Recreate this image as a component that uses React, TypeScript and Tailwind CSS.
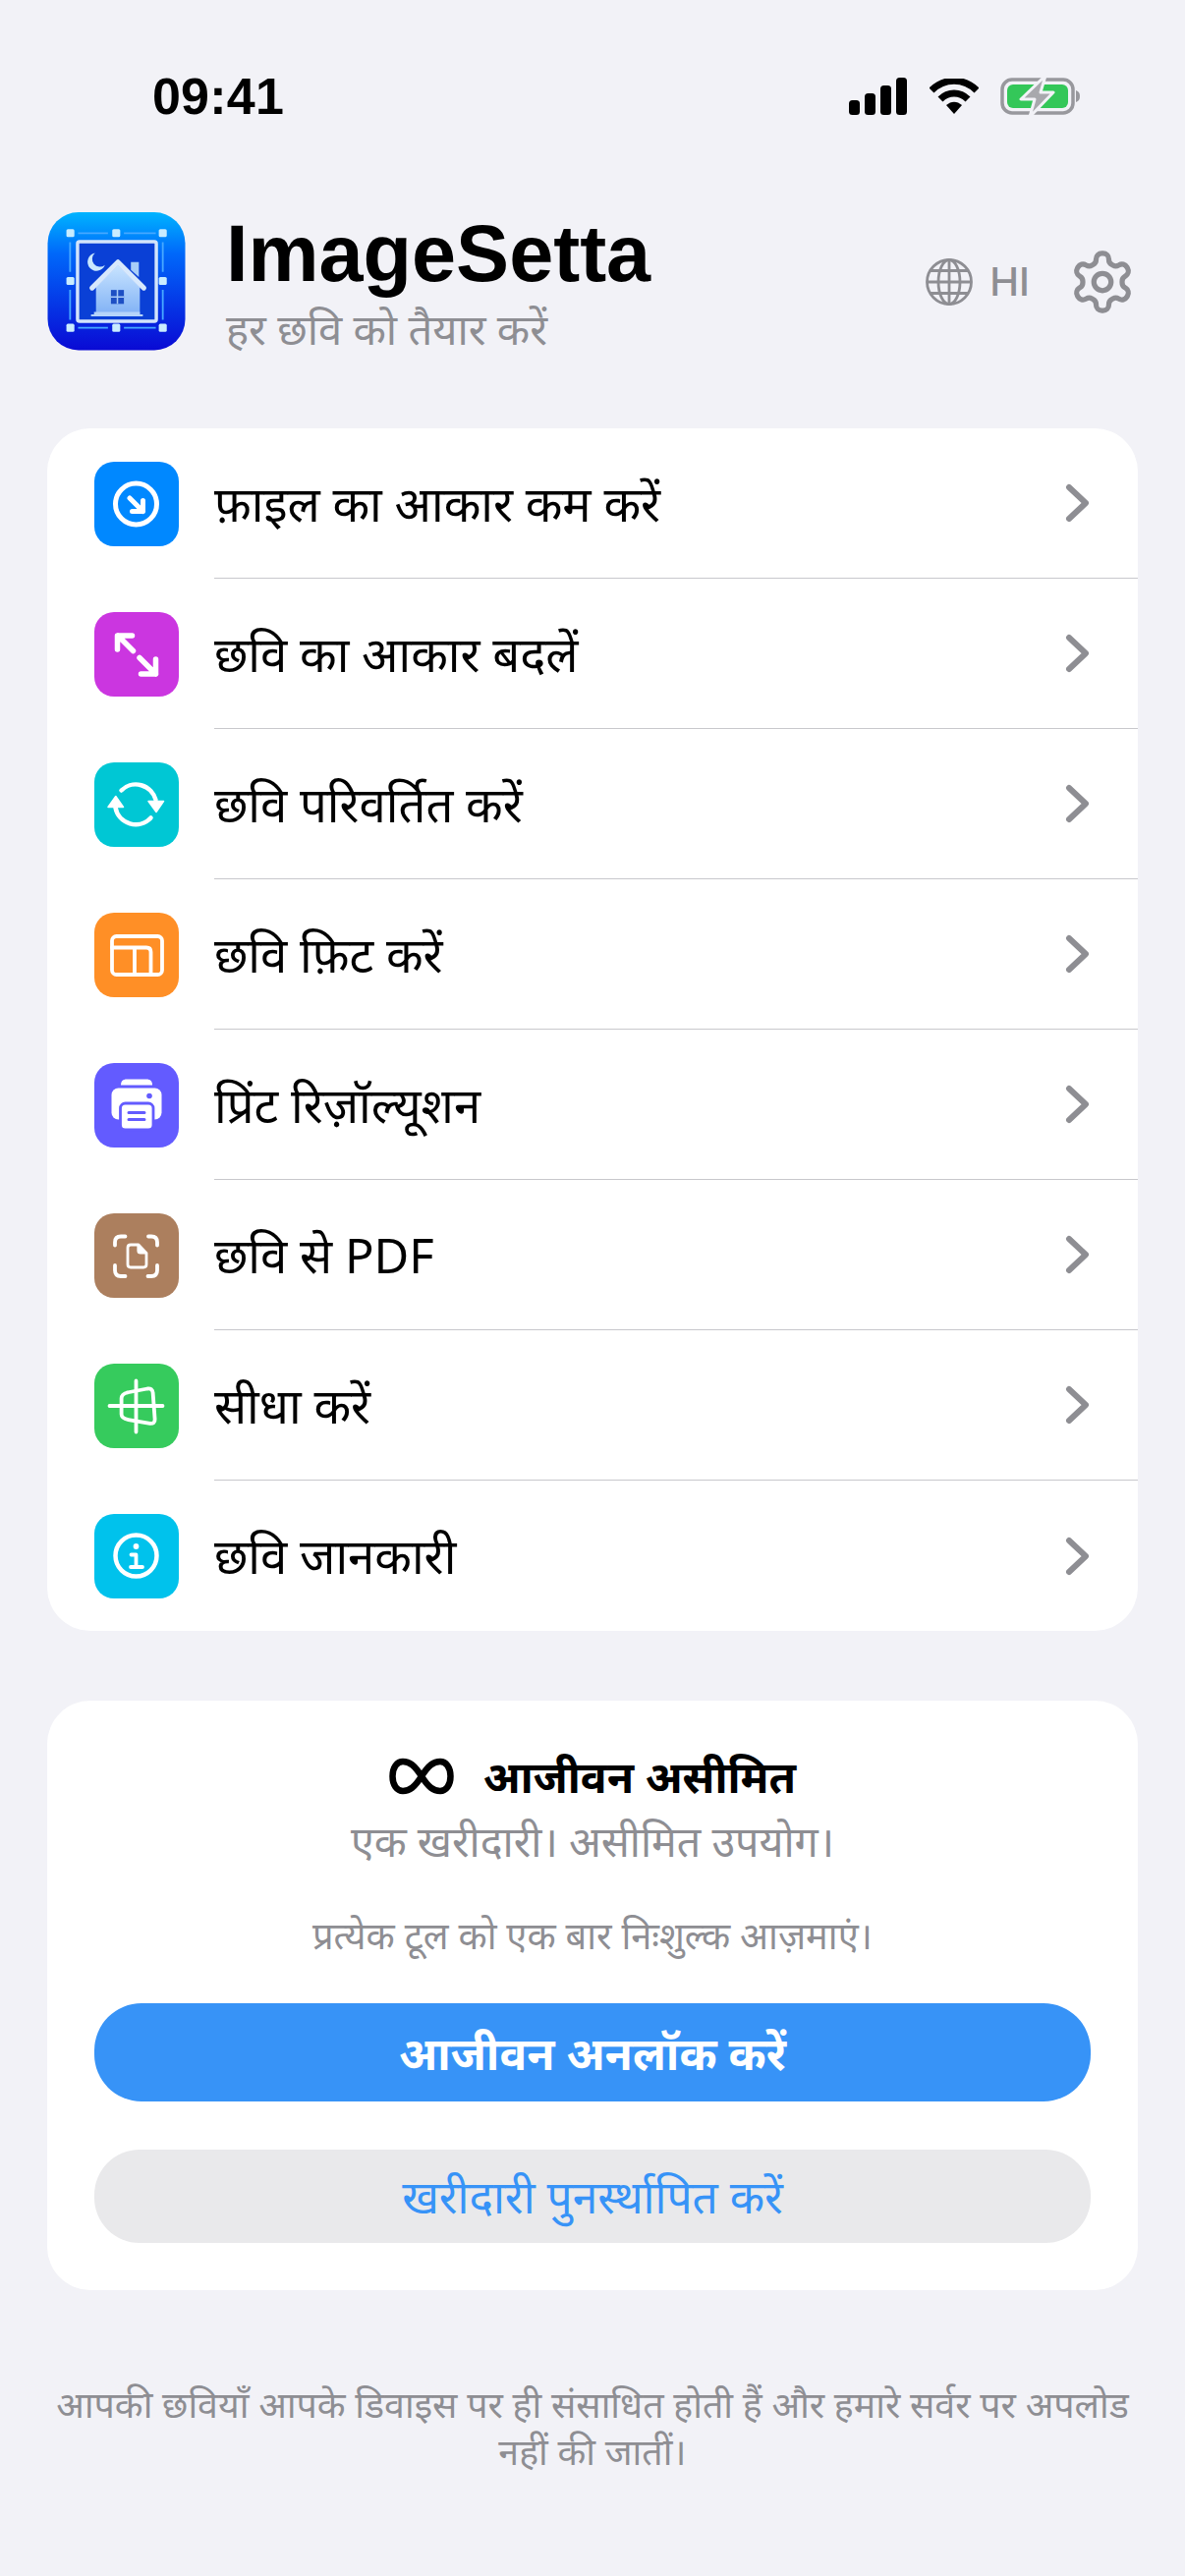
const rows = [
  { label: 'फ़ाइल का आकार कम करें', color: 'bg-[#0088ff]', icon: 'shrink' },
  { label: 'छवि का आकार बदलें', color: 'bg-[#cb36e0]', icon: 'resize' },
  { label: 'छवि परिवर्तित करें', color: 'bg-[#00c7d4]', icon: 'convert' },
  { label: 'छवि फ़िट करें', color: 'bg-[#ff8f26]', icon: 'fit' },
  { label: 'प्रिंट रिज़ॉल्यूशन', color: 'bg-[#635bff]', icon: 'print' },
  { label: 'छवि से PDF', color: 'bg-[#ac7f5e]', icon: 'pdf' },
  { label: 'सीधा करें', color: 'bg-[#36cb5d]', icon: 'straighten' },
  { label: 'छवि जानकारी', color: 'bg-[#00c2ec]', icon: 'info' },
];

function RowIcon({ name }: { name: string }) {
  const line = { fill: 'none', stroke: 'white', strokeLinecap: 'round', strokeLinejoin: 'round' } as const;
  return (
    <svg viewBox="0 0 86 86" className="w-full h-full">
      {name === 'shrink' && (
        <g {...line} strokeWidth={5}>
          <circle cx="42.5" cy="43" r="21" />
          <path d="M36 37l13.5 13.5M49.5 39.5v11H38.5" />
        </g>
      )}
      {name === 'resize' && (
        <g {...line} strokeWidth={5.5}>
          <path d="M23.5 38V24h15M24 24l15.5 15.5M62.5 48v15h-15M62.5 63L46 46.5" />
        </g>
      )}
      {name === 'convert' && (
        <g>
          <g {...line} strokeWidth={4.5}>
            <path d="M27.5 28.5A21 21 0 0 1 62.5 38" />
            <path d="M57.5 56.5A21 21 0 0 1 21.5 46" />
          </g>
          <path d="M55 39.5H70.5L63 50.5zM14 45.5H29.5L21.8 34.5z" fill="white" stroke="white" strokeLinejoin="round" strokeWidth={1.5} />
        </g>
      )}
      {name === 'fit' && (
        <g {...line} strokeWidth={3.8}>
          <rect x="18" y="24" width="51" height="39" rx="4.5" />
          <path d="M18 35.5h35q4.5 0 4.5 4.5v23M41 35.5V63" />
        </g>
      )}
      {name === 'print' && (
        <g>
          <path d="M27 22.5c0-4 2-6 6-6h20c4 0 6 2 6 6z" fill="white" />
          <rect x="17.5" y="25.5" width="51" height="32" rx="7" fill="white" />
          <circle cx="56" cy="33.5" r="2.8" fill="#635bff" />
          <rect x="26.5" y="41" width="33.5" height="27" rx="5" fill="white" stroke="#635bff" strokeWidth={2.8} />
          <path d="M35 50.5h16M35 57.5h16" stroke="#635bff" strokeWidth={3} strokeLinecap="round" />
        </g>
      )}
      {name === 'pdf' && (
        <g {...line} strokeWidth={3.8}>
          <path d="M21 32.5v-3q0-6 6-6h4.5M55 23.5h3q6 0 6 6v3M64 53v5q0 6-6 6h-3.5M31.5 64H27q-6 0-6-6v-5" />
          <path d="M37 32h8l8 8.5V52q0 3-3 3H37q-3 0-3-3V35q0-3 3-3z" strokeWidth={2.8} />
          <path d="M44.5 32v6q0 2.5 2.5 2.5h6" strokeWidth={2.2} fill="white" />
        </g>
      )}
      {name === 'straighten' && (
        <g {...line}>
          <path d="M42.5 17.5v52M15.5 43h54" strokeWidth={3.8} />
          <path d="M33 29.5l21-4q5-.8 5.6 4l2 27q.2 5-5 4.4l-22-3.8q-7-1.3-7-5.5v-16q0-5 6.4-6.1z" strokeWidth={3.8} />
        </g>
      )}
      {name === 'info' && (
        <g>
          <circle cx="42.5" cy="42.5" r="21" {...line} strokeWidth={4.5} />
          <circle cx="42.5" cy="33" r="2.9" fill="white" />
          <path d="M37.5 41.5h5V54M37 54h12" {...line} strokeWidth={3.8} />
        </g>
      )}
    </svg>
  );
}

function AppLogo() {
  const hx = [23.3, 69.3, 116];
  const hy = [21, 69, 116];
  return (
    <svg viewBox="0 0 139 139" className="w-full h-full">
      <defs>
        <linearGradient id="logoBg" x1="0" y1="0" x2="0" y2="1">
          <stop offset="0" stopColor="#00b4ff" />
          <stop offset="0.3" stopColor="#0068fa" />
          <stop offset="1" stopColor="#0a0ad4" />
        </linearGradient>
        <linearGradient id="houseFill" x1="0" y1="0" x2="0" y2="1">
          <stop offset="0" stopColor="#c8e4ff" />
          <stop offset="1" stopColor="#7fb0f5" />
        </linearGradient>
      </defs>
      <rect x="0.5" y="0" width="138" height="138.5" rx="31" fill="url(#logoBg)" />
      <g stroke="#46a8ff" strokeWidth="1.8" fill="none">
        <path d="M31 21h30M77 21h32M31 116h30M77 116h32M23 30v30M116 30v30M23 78v30M116 78v30" />
      </g>
      {hx.map((x) =>
        hy.map((y) =>
          x === hx[1] && y === hy[1] ? null : (
            <rect key={`${x}-${y}`} x={x - 4} y={y - 4} width="8" height="8" rx="1.5" fill="#c9ecff" />
          ),
        ),
      )}
      <rect x="30.5" y="29.5" width="79" height="80" rx="2" fill="#0a40d6" stroke="#d3e4fb" strokeWidth="3.4" />
      <path d="M48 41a9 9 0 1 0 10 12a7.5 7.5 0 0 1-10-12z" fill="#c9e8ff" />
      <path d="M84 50h8v15l-8-7z" fill="#a8cdf8" />
      <path d="M49 75v29h44V75L71 53z" fill="url(#houseFill)" />
      <path d="M45 76L71 50l26 26" fill="none" stroke="#d7e8fc" strokeWidth="5" strokeLinecap="round" strokeLinejoin="round" />
      <path d="M47 100h46v2.5h3v2H44v-2h3z" fill="#b5d4fa" />
      <path d="M64 78h13v14H64z" fill="#1d4fc4" />
      <path d="M70.5 78v14M64 85h13" stroke="#a8caf7" strokeWidth="1.5" />
    </svg>
  );
}

function StatusBar() {
  return (
    <div className="flex items-center justify-between h-[196px] pl-[155px] pr-[106px]">
      <span className="font-['Liberation_Sans'] font-bold text-[52px] text-black tracking-[0.2px] leading-none">09:41</span>
      <div className="flex items-center gap-[22px]">
        <svg viewBox="0 0 60 38" className="w-[60px] h-[38px]" fill="black">
          <rect x="0" y="23" width="11" height="15" rx="3.5" />
          <rect x="16" y="16" width="11" height="22" rx="3.5" />
          <rect x="32" y="8" width="11" height="30" rx="3.5" />
          <rect x="48" y="0" width="11" height="38" rx="3.5" />
        </svg>
        <svg viewBox="0 0 50 36" className="w-[50px] h-[36px]">
          <path d="M2 12C15 -1 35 -1 48 12" fill="none" stroke="black" strokeWidth="7" />
          <path d="M11 21c8-8 20-8 28 0" fill="none" stroke="black" strokeWidth="7" />
          <path d="M17 27c5-4.5 11-4.5 16 0l-8 9z" fill="black" />
        </svg>
        <svg viewBox="0 0 82 42" className="w-[82px] h-[42px]">
          <rect x="2" y="4" width="72" height="34" rx="10" fill="none" stroke="#98989d" strokeWidth="3.5" />
          <rect x="7" y="9" width="62" height="24" rx="6" fill="#34c759" />
          <path d="M77 15c3 1 4 3 4 6s-1 5-4 6z" fill="#98989d" />
          <path d="M46 0L21 24h14l-5 18 24-25H41z" fill="#a8a8ad" stroke="#f2f2f7" strokeWidth="3" strokeLinejoin="round" />
        </svg>
      </div>
    </div>
  );
}

function Header() {
  return (
    <div className="flex items-center h-[141px] mt-[20px] pl-[48px] pr-[49px]">
      <div className="w-[141px] h-[141px] shrink-0">
        <AppLogo />
      </div>
      <div className="ml-[41px] mt-[2px] flex flex-col">
        <span className="font-['Liberation_Sans'] font-bold text-[81px] leading-[84px] text-black">ImageSetta</span>
        <span className="mt-[9px] text-[43.5px] leading-[50px] text-[#8e8e93]">हर छवि को तैयार करें</span>
      </div>
      <div className="ml-auto flex items-center">
        <svg viewBox="0 0 48 48" className="w-[48px] h-[48px]" fill="none" stroke="#8e8e93" strokeWidth="2.8">
          <circle cx="24" cy="24" r="22.5" />
          <ellipse cx="24" cy="24" rx="11" ry="22.5" />
          <path d="M24 1.5v45M1.5 24h45M5 12.5h38M5 35.5h38" />
        </svg>
        <span className="ml-[17px] font-['Inter'] font-medium text-[40px] text-[#8e8e93] leading-none">HI</span>
        <svg viewBox="0 0 24 24" className="ml-[39px] w-[70px] h-[70px]" fill="none" stroke="#8e8e93" strokeWidth="1.8" strokeLinecap="round" strokeLinejoin="round">
          <path d="M12.22 2h-.44a2 2 0 0 0-2 2v.18a2 2 0 0 1-1 1.73l-.43.25a2 2 0 0 1-2 0l-.15-.08a2 2 0 0 0-2.73.73l-.22.38a2 2 0 0 0 .73 2.73l.15.1a2 2 0 0 1 1 1.72v.51a2 2 0 0 1-1 1.74l-.15.09a2 2 0 0 0-.73 2.73l.22.38a2 2 0 0 0 2.73.73l.15-.08a2 2 0 0 1 2 0l.43.25a2 2 0 0 1 1 1.73V20a2 2 0 0 0 2 2h.44a2 2 0 0 0 2-2v-.18a2 2 0 0 1 1-1.73l.43-.25a2 2 0 0 1 2 0l.15.08a2 2 0 0 0 2.73-.73l.22-.39a2 2 0 0 0-.73-2.73l-.15-.08a2 2 0 0 1-1-1.74v-.5a2 2 0 0 1 1-1.74l.15-.09a2 2 0 0 0 .73-2.73l-.22-.38a2 2 0 0 0-2.73-.73l-.15.08a2 2 0 0 1-2 0l-.43-.25a2 2 0 0 1-1-1.73V4a2 2 0 0 0-2-2z" />
          <circle cx="12" cy="12" r="3" />
        </svg>
      </div>
    </div>
  );
}

export default function App() {
  return (
    <div className="w-[1206px] h-[2622px] bg-[#f2f2f7] font-['Noto_Sans','Liberation_Sans',sans-serif] overflow-hidden">
      <StatusBar />
      <Header />

      <div className="mt-[79px] mx-[48px] w-[1110px] bg-white rounded-[44px] overflow-hidden">
        {rows.map((row, i) => (
          <div key={row.icon} className="flex items-center h-[153px] pl-[48px]">
            <div className={`w-[86px] h-[86px] rounded-[20px] shrink-0 ${row.color}`}>
              <RowIcon name={row.icon} />
            </div>
            <div className={`ml-[36px] flex-1 h-full flex items-center pr-[49px] ${i < rows.length - 1 ? 'border-b border-[#c8c8cc]' : ''}`}>
              <span className="text-[49px] text-black leading-none">{row.label}</span>
              <svg viewBox="0 0 26 44" className="ml-auto w-[26px] h-[44px]" fill="none" stroke="#8e8e93" strokeWidth="6" strokeLinecap="round" strokeLinejoin="round">
                <path d="M5 6l17 16L5 38" />
              </svg>
            </div>
          </div>
        ))}
      </div>

      <div className="mt-[71px] mx-[48px] w-[1110px] bg-white rounded-[44px] pt-[47px] pb-[48px] px-[48px] flex flex-col items-center">
        <div className="flex items-center h-[60px]">
          <svg viewBox="0 0 66 38" className="w-[66px] h-[38px]" fill="none" stroke="black" strokeWidth="6.5">
            <path d="M33 19C26 8 21 4 14 4C8 4 3.5 10 3.5 19S8 34 14 34C21 34 26 30 33 19C40 8 45 4 52 4C58 4 62.5 10 62.5 19S58 34 52 34C45 34 40 30 33 19Z" />
          </svg>
          <span className="ml-[30px] font-bold text-[44.5px] leading-none text-black">आजीवन असीमित</span>
        </div>
        <p className="mt-[11px] text-[43px] leading-[50px] text-[#8e8e93]">एक खरीदारी। असीमित उपयोग।</p>
        <p className="mt-[48px] text-[38px] leading-[44px] text-[#8e8e93]">प्रत्येक टूल को एक बार निःशुल्क आज़माएं।</p>
        <button className="mt-[48px] w-full h-[100px] rounded-[48px] bg-[#3793f7] text-white font-bold text-[46px]">आजीवन अनलॉक करें</button>
        <button className="mt-[49px] w-full h-[95px] rounded-[46px] bg-[#e9e9eb] text-[#3793f7] text-[46px]">खरीदारी पुनर्स्थापित करें</button>
      </div>

      <p className="mt-[92px] mx-[48px] text-center text-[37.5px] leading-[48px] text-[#8e8e93]">
        आपकी छवियाँ आपके डिवाइस पर ही संसाधित होती हैं और हमारे सर्वर पर अपलोड नहीं की जातीं।
      </p>
    </div>
  );
}
